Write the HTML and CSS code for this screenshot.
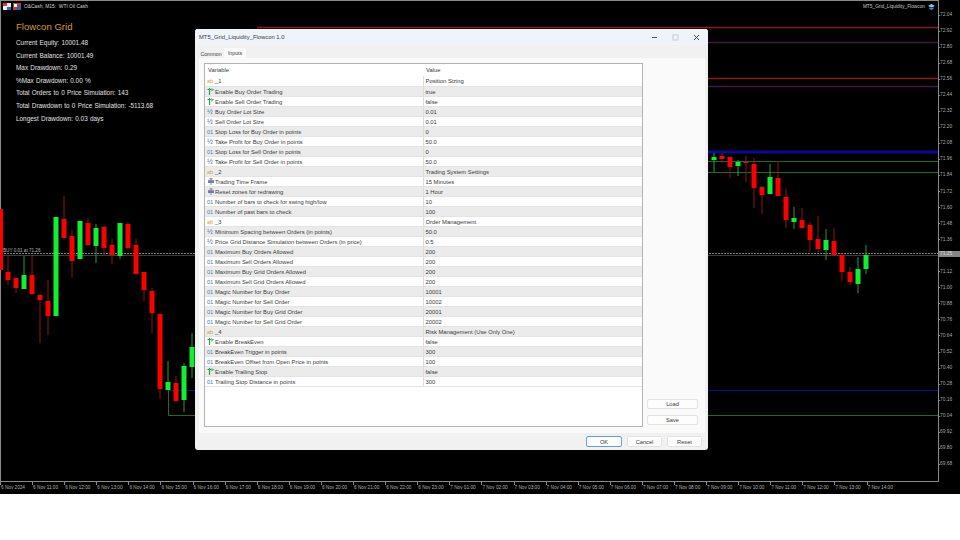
FILE: index.html

```html
<!DOCTYPE html>
<html lang="en">
<head>
  <meta charset="UTF-8" />
  <title>MT5_Grid_Liquidity_Flowcon 1.0</title>
  <link rel="stylesheet" href="styles.css">
</head>
<body>
  <svg class="defs" width="0" height="0">
    <symbol id="i-bool" viewBox="0 0 7 7">
      <path d="M2 0V7M0 1.5H4" stroke="#2f9e4f" stroke-width="1.2" fill="none"/>
      <path d="M3.8 0L7 1.8 3.8 3.6z" fill="#58c078"/>
    </symbol>
    <symbol id="i-enum" viewBox="0 0 7 7">
      <path d="M3.5 0V7" stroke="#7f8db5"/>
      <rect x="0.5" y="2.2" width="6" height="2.8" fill="#6d7fb0"/>
      <rect x="2" y="0" width="3" height="1.8" fill="#c58aa8"/>
    </symbol>
  </svg>

  <div class="chart">
    <div class="chart-row">
      <div class="plot"></div>
      <div class="price-axis">
        <span>72.04</span><span>72.92</span><span>72.80</span><span>72.68</span><span>72.56</span>
        <span>72.44</span><span>72.32</span><span>72.20</span><span>72.08</span><span>71.96</span>
        <span>71.84</span><span>71.72</span><span>71.60</span><span>71.48</span><span>71.36</span>
        <span class="now">71.25</span><span>71.12</span><span>71.00</span><span>70.88</span><span>70.76</span>
        <span>70.64</span><span>70.52</span><span>70.40</span><span>70.28</span><span>70.16</span>
        <span>70.04</span><span>69.92</span><span>69.80</span><span>69.68</span>
      </div>
    </div>
    <div class="time-axis">
      <span>6 Nov 2024</span><span>6 Nov 11:00</span><span>6 Nov 12:00</span><span>6 Nov 13:00</span>
      <span>6 Nov 14:00</span><span>6 Nov 15:00</span><span>6 Nov 16:00</span><span>6 Nov 17:00</span>
      <span>6 Nov 18:00</span><span>6 Nov 19:00</span><span>6 Nov 20:00</span><span>6 Nov 21:00</span>
      <span>6 Nov 22:00</span><span>6 Nov 23:00</span><span>7 Nov 01:00</span><span>7 Nov 02:00</span>
      <span>7 Nov 03:00</span><span>7 Nov 04:00</span><span>7 Nov 05:00</span><span>7 Nov 06:00</span>
      <span>7 Nov 07:00</span><span>7 Nov 08:00</span><span>7 Nov 09:00</span><span>7 Nov 10:00</span>
      <span>7 Nov 11:00</span><span>7 Nov 12:00</span><span>7 Nov 13:00</span><span>7 Nov 14:00</span>
    </div>

    <!-- candles and levels, in page coordinates -->
    <svg class="canvas" width="960" height="494" viewBox="0 0 960 494">
      <g class="lvl-red"><path d="M257 27.5H938M195 78.5H938"/></g>
      <g class="lvl-purple"><path d="M195 42.5H938M195 86.5H938"/></g>
      <g class="lvl-blue"><path d="M195 152H938" stroke-width="3"/><path d="M168 390.5H938"/></g>
      <g class="lvl-green"><path d="M195 161.5H938M195 172.5H938M168.5 390V415.5H938"/></g>
      <path class="price-line" d="M1 253.5H938"/>
      <path class="price-line2" d="M1 255.5H938"/>

      <path class="wick-red" d="M8 255V285M16 278V293M32 255V294M40 295V343M48 280V335M64 196V238M72 230V278M88 218V245M104 227V255M112 239V264M128 222V250M136 239V274M144 272V301M152 288V333M160 314V399M176 376V402M722 153V163M730 157V178M746 156V182M754 158V208M762 187V214M778 161V196M786 189V228M802 208V228M810 222V252M818 216V252M834 228V255M842 255V281M850 267V285"/>
      <path class="wick-green" d="M24 256V289M96 224V263M120 223V259M168 361V390M184 363V412M192 333V378M714 153V172M738 160V176M770 164V194M794 207V229M826 229V260M858 257V293M866 245V274"/>

      <g class="body-red">
        <rect x="0" y="209" width="3" height="61"/>
        <rect x="5.5" y="272" width="5" height="8"/>
        <rect x="13.5" y="278" width="5" height="10"/>
        <rect x="29.5" y="275" width="5" height="19"/>
        <rect x="37.5" y="295" width="5" height="5"/>
        <rect x="45.5" y="301" width="5" height="15"/>
        <rect x="61.5" y="219" width="5" height="19"/>
        <rect x="69.5" y="236" width="5" height="25"/>
        <rect x="85.5" y="223" width="5" height="22"/>
        <rect x="101.5" y="227" width="5" height="21"/>
        <rect x="109.5" y="245" width="5" height="10"/>
        <rect x="125.5" y="224" width="5" height="24"/>
        <rect x="133.5" y="245" width="5" height="29"/>
        <rect x="141.5" y="272" width="5" height="18"/>
        <rect x="149.5" y="291" width="5" height="22"/>
        <rect x="157.5" y="314" width="5" height="75"/>
        <rect x="173.5" y="383" width="5" height="18"/>
        <rect x="719.5" y="156" width="5" height="3"/>
        <rect x="727.5" y="157" width="5" height="10"/>
        <rect x="743.5" y="162" width="5" height="1"/>
        <rect x="751.5" y="164" width="5" height="24"/>
        <rect x="759.5" y="187" width="5" height="8"/>
        <rect x="775.5" y="178" width="5" height="18"/>
        <rect x="783.5" y="197" width="5" height="23"/>
        <rect x="799.5" y="220" width="5" height="8"/>
        <rect x="807.5" y="225" width="5" height="15"/>
        <rect x="815.5" y="239" width="5" height="10"/>
        <rect x="831.5" y="241" width="5" height="14"/>
        <rect x="839.5" y="255" width="5" height="17"/>
        <rect x="847.5" y="272" width="5" height="10"/>
      </g>
      <g class="body-green">
        <rect x="21.5" y="275" width="5" height="14"/>
        <rect x="53.5" y="217" width="5" height="99"/>
        <rect x="77.5" y="221" width="5" height="38"/>
        <rect x="93.5" y="228" width="5" height="18"/>
        <rect x="117.5" y="223" width="5" height="33"/>
        <rect x="165.5" y="382" width="5" height="8"/>
        <rect x="181.5" y="366" width="5" height="34"/>
        <rect x="189.5" y="347" width="5" height="20"/>
        <rect x="711.5" y="157" width="5" height="3"/>
        <rect x="735.5" y="162" width="5" height="4"/>
        <rect x="767.5" y="177" width="5" height="17"/>
        <rect x="791.5" y="218" width="5" height="4"/>
        <rect x="823.5" y="240" width="5" height="10"/>
        <rect x="855.5" y="269" width="5" height="15"/>
        <rect x="863.5" y="255" width="5" height="14"/>
      </g>
    </svg>

    <div class="symbol-bar">
      <svg class="flag" viewBox="0 0 8 7"><rect width="8" height="7" fill="#eee"/><rect width="4" height="3" fill="#d33"/><rect x="4" y="4" width="4" height="3" fill="#36c"/></svg>
      <svg class="flag" viewBox="0 0 8 7"><rect width="8" height="7" fill="#c33"/><rect x="1" y="1" width="3" height="3" fill="#fff"/><rect x="4" y="3" width="4" height="4" fill="#26a"/></svg>
      <span>O&amp;Cash, M15:&nbsp; WTI Oil Cash</span>
    </div>
    <div class="ea-name">
      <span>MT5_Grid_Liquidity_Flowcon</span>
      <svg class="cap" viewBox="0 0 7 6"><path d="M0 2L3.5 0 7 2 3.5 3.5z" fill="#8fc3ee"/><path d="M1.5 3.2V5L3.5 6 5.5 5V3.2L3.5 4.2z" fill="#4a8fd0"/></svg>
    </div>
    <div class="buy-tag">BUY 0.01 at 71.26</div>

    <div class="stats">
      <h1>Flowcon Grid</h1>
      <p>Current Equity: 10001.48</p>
      <p>Current Balance: 10001.49</p>
      <p>Max Drawdown: 0.29</p>
      <p>%Max Drawdown: 0.00 %</p>
      <p>Total Orders to 0 Price Simulation: 143</p>
      <p>Total Drawdown to 0 Price Simulation: -5113.68</p>
      <p>Longest Drawdown: 0.03 days</p>
    </div>
  </div>

  <div class="dialog">
    <div class="title-bar">
      <span>MT5_Grid_Liquidity_Flowcon 1.0</span>
      <div class="win-btns">
        <svg viewBox="0 0 7 7"><path d="M1 3.5H6" stroke="#555"/></svg>
        <svg viewBox="0 0 7 7"><rect x="1" y="1" width="5" height="5" fill="none" stroke="#ccc"/></svg>
        <svg viewBox="0 0 7 7"><path d="M1 1L6 6M6 1L1 6" stroke="#444"/></svg>
      </div>
    </div>
    <div class="tabs">
      <span class="tab">Common</span>
      <span class="tab active">Inputs</span>
    </div>
    <div class="panel">
      <div class="grid-box">
        <table>
          <thead>
            <tr><th class="col-var">Variable</th><th>Value</th></tr>
          </thead>
          <tbody>
            <tr><td><span class="ic ab">ab</span>_1</td><td>Position Sizing</td></tr>
            <tr><td><svg class="ic"><use href="#i-bool"/></svg>Enable Buy Order Trading</td><td>true</td></tr>
            <tr><td><svg class="ic"><use href="#i-bool"/></svg>Enable Sell Order Trading</td><td>false</td></tr>
            <tr><td><span class="ic half">½</span>Buy Order Lot Size</td><td>0.01</td></tr>
            <tr><td><span class="ic half">½</span>Sell Order Lot Size</td><td>0.01</td></tr>
            <tr><td><span class="ic num">01</span>Stop Loss for Buy Order in points</td><td>0</td></tr>
            <tr><td><span class="ic half">½</span>Take Profit for Buy Order in points</td><td>50.0</td></tr>
            <tr><td><span class="ic num">01</span>Stop Loss for Sell Order in points</td><td>0</td></tr>
            <tr><td><span class="ic half">½</span>Take Profit for Sell Order in points</td><td>50.0</td></tr>
            <tr><td><span class="ic ab">ab</span>_2</td><td>Trading System Settings</td></tr>
            <tr><td><svg class="ic"><use href="#i-enum"/></svg>Trading Time Frame</td><td>15 Minutes</td></tr>
            <tr><td><svg class="ic"><use href="#i-enum"/></svg>Reset zones for redrawing</td><td>1 Hour</td></tr>
            <tr><td><span class="ic num">01</span>Number of bars to check for swing high/low</td><td>10</td></tr>
            <tr><td><span class="ic num">01</span>Number of past bars to check</td><td>100</td></tr>
            <tr><td><span class="ic ab">ab</span>_3</td><td>Order Management</td></tr>
            <tr><td><span class="ic half">½</span>Minimum Spacing between Orders (in points)</td><td>50.0</td></tr>
            <tr><td><span class="ic half">½</span>Price Grid Distance Simulation between Orders (in price)</td><td>0.5</td></tr>
            <tr><td><span class="ic num">01</span>Maximum Buy Orders Allowed</td><td>200</td></tr>
            <tr><td><span class="ic num">01</span>Maximum Sell Orders Allowed</td><td>200</td></tr>
            <tr><td><span class="ic num">01</span>Maximum Buy Grid Orders Allowed</td><td>200</td></tr>
            <tr><td><span class="ic num">01</span>Maximum Sell Grid Orders Allowed</td><td>200</td></tr>
            <tr><td><span class="ic num">01</span>Magic Number for Buy Order</td><td>10001</td></tr>
            <tr><td><span class="ic num">01</span>Magic Number for Sell Order</td><td>10002</td></tr>
            <tr><td><span class="ic num">01</span>Magic Number for Buy Grid Order</td><td>20001</td></tr>
            <tr><td><span class="ic num">01</span>Magic Number for Sell Grid Order</td><td>20002</td></tr>
            <tr><td><span class="ic ab">ab</span>_4</td><td>Risk Management (Use Only One)</td></tr>
            <tr><td><svg class="ic"><use href="#i-bool"/></svg>Enable BreakEven</td><td>false</td></tr>
            <tr><td><span class="ic num">01</span>BreakEven Trigger in points</td><td>300</td></tr>
            <tr><td><span class="ic num">01</span>BreakEven Offset from Open Price in points</td><td>100</td></tr>
            <tr><td><svg class="ic"><use href="#i-bool"/></svg>Enable Trailing Stop</td><td>false</td></tr>
            <tr><td><span class="ic num">01</span>Trailing Stop Distance in points</td><td>300</td></tr>
          </tbody>
        </table>
      </div>
      <div class="side-btns">
        <button>Load</button>
        <button>Save</button>
      </div>
    </div>
    <div class="footer">
      <button class="primary">OK</button>
      <button>Cancel</button>
      <button>Reset</button>
    </div>
  </div>
</body>
</html>
```

FILE: styles.css

```css
body {
  margin: 0;
  background-color: #fff;
  font-family: "Liberation Sans", Arial, sans-serif;
  position: relative;
  width: 960px;
  height: 540px;
  overflow: hidden;
}
.defs {
  position: absolute;
}

/* chart window */
.chart {
  position: relative;
  height: 494px;
  background-color: #000;
  display: flex;
  flex-direction: column;
  color: #b5b5b5;
  font-size: 4.9px;
}
.chart-row {
  flex: 1;
  display: flex;
  min-height: 0;
}
.plot {
  flex: 1;
  border: 1px solid #8a8a8a;
}
.price-axis {
  width: 21px;
  padding-top: 7px;
  display: flex;
  flex-direction: column;
}
.price-axis span {
  flex: 0 0 16.05px;
  line-height: 16px;
  padding-left: 1px;
  color: #a8a8a8;
  background: linear-gradient(#8a8a8a, #8a8a8a) left center / 1px 1px no-repeat;
}
.price-axis .now {
  background: linear-gradient(#000 5px, #858585 5px, #858585 11px, #000 11px);
  margin-top: -2px;
  margin-bottom: 2px;
  color: #ddd;
}
.time-axis {
  height: 12px;
  display: flex;
  white-space: nowrap;
}
.time-axis span {
  flex: 0 0 32.1px;
  padding: 2px 0 0 1px;
  box-sizing: border-box;
  line-height: 7px;
  font-size: 4.7px;
  color: #b0b0b0;
  background: linear-gradient(#8a8a8a, #8a8a8a) left top / 1px 3px no-repeat;
}
.canvas {
  position: absolute;
  top: 0;
  left: 0;
}
.canvas path {
  fill: none;
}
.lvl-red path { stroke: #8c1c1c; stroke-width: 1.4; }
.lvl-purple path { stroke: #3f1b4a; stroke-width: 1.4; }
.lvl-blue path { stroke: #0a0a9c; }
.lvl-green path { stroke: #1d6e1d; }
.price-line {
  stroke: #808080;
  stroke-dasharray: 2 1;
}
.price-line2 {
  stroke: #3d3d3d;
}
.wick-red { stroke: #8c1414; }
.wick-green { stroke: #2f9a3a; }
.body-red { fill: #fa0000; }
.body-green { fill: #10f030; }

.symbol-bar {
  position: absolute;
  top: 3px;
  left: 3px;
  display: flex;
  align-items: center;
  gap: 2px;
  color: #d0d0d0;
  font-size: 4.9px;
  line-height: 7px;
}
.flag {
  width: 8px;
  height: 7px;
}
.symbol-bar span {
  margin-left: 1px;
}
.ea-name {
  position: absolute;
  top: 3px;
  right: 25px;
  display: flex;
  align-items: center;
  gap: 3px;
  color: #c8c8c8;
  font-size: 4.8px;
  line-height: 7px;
}
.cap {
  width: 7px;
  height: 6px;
}
.buy-tag {
  position: absolute;
  top: 248px;
  left: 3px;
  color: #b8b8b8;
  font-size: 4.6px;
  line-height: 6px;
}
.stats {
  position: absolute;
  top: 21px;
  left: 16px;
  color: #e2e2e2;
  font-size: 6.4px;
}
.stats h1 {
  margin: 0 0 5px;
  font-size: 9.6px;
  line-height: 12px;
  font-weight: normal;
  color: #d9982c;
}
.stats p {
  margin: 0;
  height: 12.6px;
  line-height: 9px;
  word-spacing: 0.5px;
}

/* inputs dialog */
.dialog {
  position: absolute;
  top: 29px;
  left: 195px;
  width: 513px;
  height: 421px;
  background-color: #f1f1f1;
  border-radius: 3px;
  display: flex;
  flex-direction: column;
  color: #3a3a3a;
  font-size: 5.85px;
}
.title-bar {
  height: 16px;
  flex: none;
  display: flex;
  align-items: center;
  justify-content: space-between;
  padding-left: 4px;
  background-color: #eff3fa;
  border-radius: 3px 3px 0 0;
  font-size: 5.85px;
}
.win-btns {
  display: flex;
  gap: 14px;
  padding-right: 8px;
}
.win-btns svg {
  width: 7px;
  height: 7px;
}
.tabs {
  height: 13px;
  flex: none;
  display: flex;
  align-items: flex-end;
  padding-left: 3px;
  font-size: 5.2px;
}
.tab {
  height: 10px;
  line-height: 12px;
  width: 26px;
  text-align: center;
}
.tab.active {
  width: 22px;
  background-color: #fafafa;
  line-height: 10px;
}
.panel {
  height: 375px;
  flex: none;
  margin: 0 3px 0 4px;
  padding: 5px 7px 6px 5px;
  box-sizing: border-box;
  background-color: #fafafa;
  display: flex;
  gap: 4px;
}
.grid-box {
  width: 439px;
  flex: none;
  box-sizing: border-box;
  background-color: #fff;
  border: 1px solid #b4b4b4;
}
table {
  width: 100%;
  table-layout: fixed;
  border-collapse: collapse;
}
th {
  height: 12px;
  padding: 0 0 0 3px;
  text-align: left;
  font-weight: normal;
}
th.col-var {
  width: 215px;
}
td {
  height: 10px;
  padding: 1px 0 0 2px;
  line-height: 8px;
  white-space: nowrap;
  border-bottom: 1px solid #e4e4e4;
  box-sizing: border-box;
}
td:first-child {
  border-right: 1px solid #dcdcdc;
}
tbody tr:nth-child(even) {
  background-color: #ebebeb;
}
.ic {
  display: inline-block;
  width: 8px;
  height: 8px;
  vertical-align: top;
  font-size: 5.6px;
  line-height: 8px;
}
svg.ic {
  height: 7px;
}
.ab { color: #d6a43a; }
.half { color: #4f7aa8; font-size: 7px; }
.num { color: #3a80b5; }
.side-btns {
  flex: 1;
  display: flex;
  flex-direction: column;
  justify-content: flex-end;
  gap: 6px;
  padding-bottom: 2px;
}
button {
  height: 10px;
  padding: 0;
  background-color: #fdfdfd;
  border: 1px solid #e2e2e2;
  border-radius: 2px;
  color: #3a3a3a;
  font-family: inherit;
  font-size: 5.7px;
  line-height: 8px;
}
.footer {
  flex: 1;
  display: flex;
  justify-content: flex-end;
  align-items: center;
  gap: 5px;
  padding-right: 6px;
}
.footer button {
  width: 35px;
  height: 11px;
}
.footer .primary {
  width: 36px;
  border-color: #5da3d2;
}
```
